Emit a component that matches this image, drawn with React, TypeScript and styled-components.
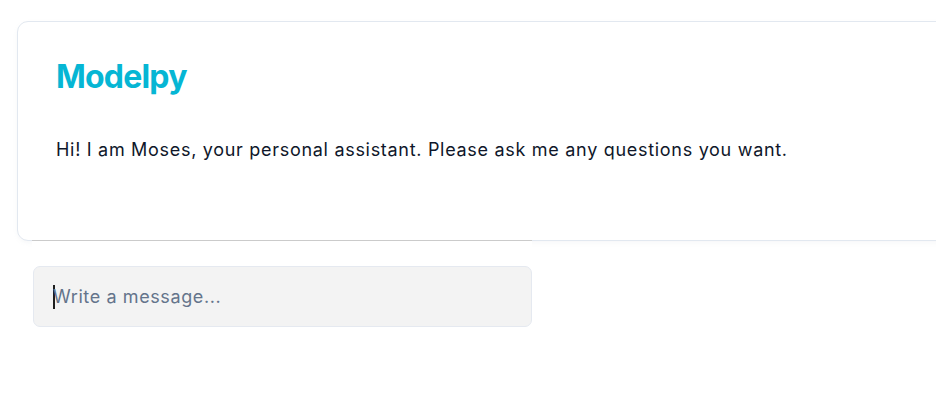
import React from "react";
import styled, { createGlobalStyle } from "styled-components";

const Global = createGlobalStyle`
  html, body { margin: 0; padding: 0; background: #ffffff; overflow: hidden; }
  body { font-family: Inter, "Noto Sans", sans-serif; }
`;

const Page = styled.div`
  width: 936px;
  height: 412px;
  padding: 21px 0 0 17px;
  box-sizing: border-box;
  display: flex;
  flex-direction: column;
`;

const Card = styled.section`
  width: 940px;
  height: 220px;
  box-sizing: border-box;
  background: #ffffff;
  border: 1px solid #e2e8f0;
  border-radius: 11px;
  box-shadow: 0 2px 4px rgba(148, 163, 184, 0.08);
  padding: 35px 38px;
  display: flex;
  flex-direction: column;
  gap: 40px;
`;

const Brand = styled.h1`
  margin: 0;
  font-size: 32px;
  line-height: 40px;
  font-weight: 700;
  letter-spacing: -0.8px;
  color: #06b6d4;
`;

const Message = styled.p`
  margin: 0;
  font-size: 18px;
  line-height: 26px;
  font-weight: 400;
  letter-spacing: 0.7px;
  color: #0f172a;
`;

const Composer = styled.div`
  width: 500px;
  margin: -1px 0 0 15px;
  border-top: 1px solid #cbcbcb;
  background: #ffffff;
  padding-top: 25px;
`;

const Field = styled.label`
  display: flex;
  align-items: center;
  height: 61px;
  box-sizing: border-box;
  margin-left: 1px;
  width: 499px;
  padding: 0 19px;
  background: #f3f3f3;
  border: 1px solid #e5e9f0;
  border-radius: 7px;
`;

const Input = styled.input`
  flex: 1;
  border: none;
  outline: none;
  background: transparent;
  font-family: Inter, "Noto Sans", sans-serif;
  font-size: 18px;
  letter-spacing: 0.6px;
  color: #0f172a;
  padding: 0;
  &::placeholder { color: #64748b; }
`;

const Caret = styled.span`
  width: 1.5px;
  height: 24px;
  background: #1e1e1e;
  margin-right: -1.5px;
`;

export default function App() {
  return (
    <>
      <Global />
      <Page>
        <Card>
          <Brand>Modelpy</Brand>
          <Message>
            Hi! I am Moses, your personal assistant. Please ask me any questions you want.
          </Message>
        </Card>
        <Composer>
          <Field>
            <Caret />
            <Input placeholder="Write a message..." />
          </Field>
        </Composer>
      </Page>
    </>
  );
}
